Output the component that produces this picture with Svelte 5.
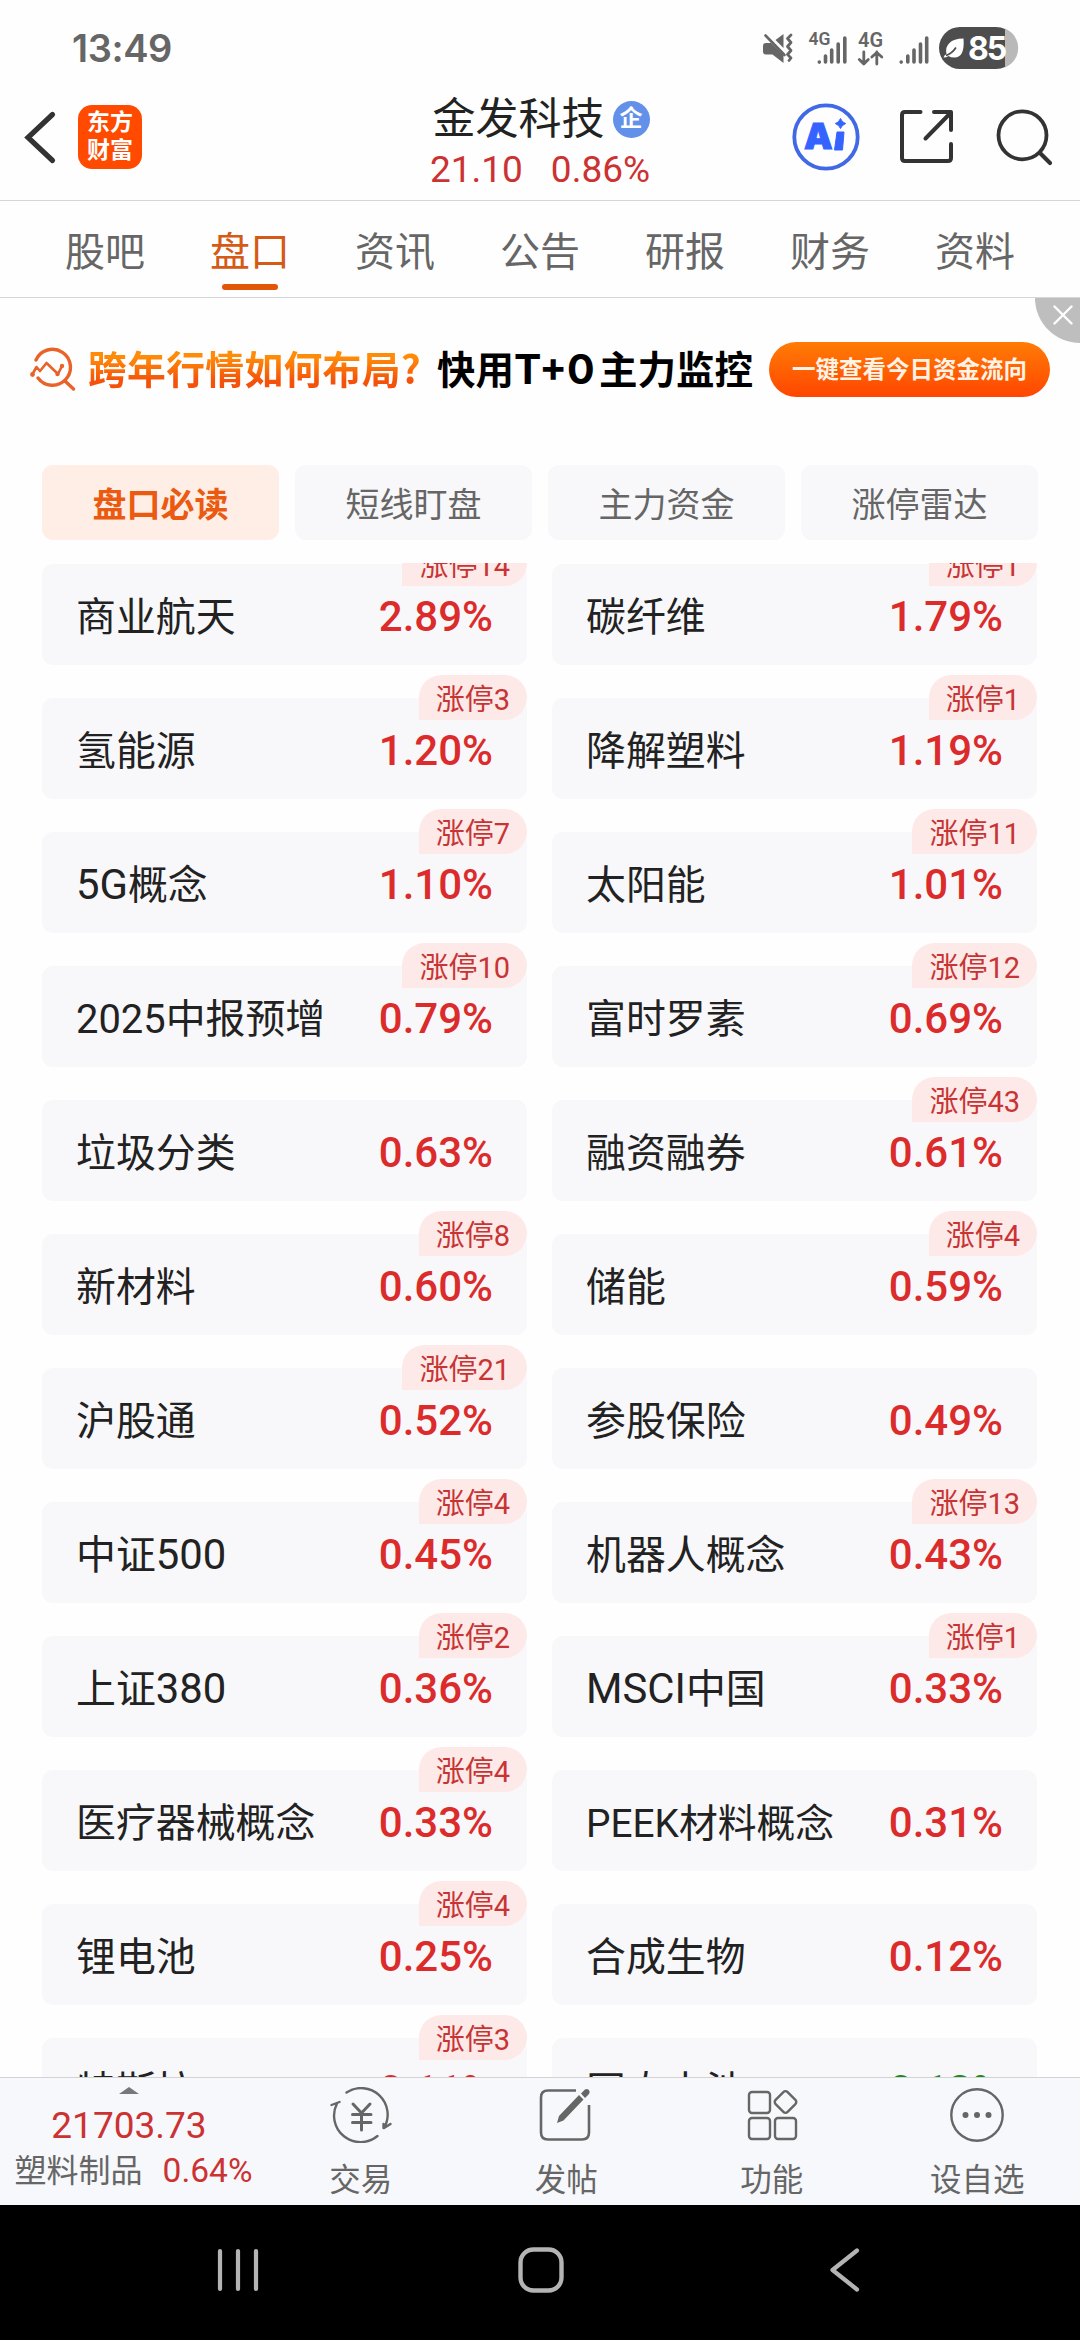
<script>
  const tabs = ['股吧', '盘口', '资讯', '公告', '研报', '财务', '资料'];
  const chips = ['盘口必读', '短线盯盘', '主力资金', '涨停雷达'];
  const sectors = [
    ['商业航天', '2.89%', 14], ['碳纤维', '1.79%', 1],
    ['氢能源', '1.20%', 3], ['降解塑料', '1.19%', 1],
    ['5G概念', '1.10%', 7], ['太阳能', '1.01%', 11],
    ['2025中报预增', '0.79%', 10], ['富时罗素', '0.69%', 12],
    ['垃圾分类', '0.63%', 0], ['融资融券', '0.61%', 43],
    ['新材料', '0.60%', 8], ['储能', '0.59%', 4],
    ['沪股通', '0.52%', 21], ['参股保险', '0.49%', 0],
    ['中证500', '0.45%', 4], ['机器人概念', '0.43%', 13],
    ['上证380', '0.36%', 2], ['MSCI中国', '0.33%', 1],
    ['医疗器械概念', '0.33%', 4], ['PEEK材料概念', '0.31%', 0],
    ['锂电池', '0.25%', 4], ['合成生物', '0.12%', 0],
    ['特斯拉', '0.11%', 3], ['固态电池', '-0.13%', 0]
  ];
  // Latin runs are set slightly larger than the Chinese characters beside them.
  const runs = (name) => name.match(/[A-Z0-9]+|[^A-Z0-9]+/g);
</script>

<div class="screen">
  <div class="status">
    <span class="time">13:49</span>
    <svg class="sysicons" viewBox="760 20 260 56" width="260" height="56">
      <g fill="#666">
        <path d="M766 43h5l12.500 12v8l-11-8.500h-6.500q-3 0-3-3v-5.500q0-3 3-3z" />
        <path d="M775.500 40l8-6v14z" />
      </g>
      <path d="M765.500 35.500l19 19.500" stroke="#666" stroke-width="2.600" stroke-linecap="round" />
      <path d="M791 35l-3.500 3.500 3.500 4-3.500 4 3.500 4-3.500 4 3.500 3.500-2 2.500" fill="none" stroke="#666" stroke-width="2.800" stroke-linecap="round" stroke-linejoin="round" />
      <text class="net" x="808.500" y="44.500" font-size="17.500">4G</text>
      <text class="net" x="858" y="46.500" font-size="20">4G</text>
      <g stroke="#666" stroke-width="3.600" stroke-linecap="round">
        <path d="M819.300 62v.1M825.500 62v-6M831.700 62V50M838.200 62V44M844.800 62V38" />
        <path d="M901.200 62v.1M907.800 62v-6M914 62V50M920.500 62V44M926.700 62V38" />
      </g>
      <path d="M863.800 52v12m-4.500-4.500l4.500 4.500 4.500-4.500M876.800 64V52m-5 5l5-4.500 5 4.500" fill="none" stroke="#666" stroke-width="2.800" stroke-linecap="round" stroke-linejoin="round" />
      <path d="M1005 28.500a21 21 0 0 1 0 39z" fill="#b9b9b9" />
      <path d="M960 27h36q5 0 9 2v38q-4 2-9 2h-36a21 21 0 0 1 0-42z" fill="#4d4d4d" />
      <path d="M963.500 38.500q1.500 19-9 19-4 0-6-1.500-2 1.500-5 1.500 .5-2.500 3-3.500-1.500-7 3-11 4-4.500 14-4.500z" fill="#fff" />
      <path d="M946 55.500q6-2 10-8" fill="none" stroke="#4d4d4d" stroke-width="1.800" />
      <text class="batt" x="968" y="59.500" font-size="32">85</text>
    </svg>
  </div>

  <header>
    <div class="left">
      <svg width="36" height="56" viewBox="22 109 36 56"><path d="M52.500 114.500L28 137.500l24.500 23" fill="none" stroke="#333" stroke-width="5.200" stroke-linecap="round" /></svg>
      <div class="logo"><span>东方</span><span>财富</span></div>
    </div>
    <div class="middle">
      <div class="title"><span>金发科技</span><i class="corp">企</i></div>
      <div class="price"><span>21.10</span><span>0.86%</span></div>
    </div>
    <div class="actions">
      <svg width="68" height="68" viewBox="792 103 68 68">
        <circle cx="826" cy="137" r="31.700" fill="none" stroke="#4169e6" stroke-width="3.800" />
        <text class="ai" x="804" y="149" font-size="36">A</text>
        <path d="M837 132h7l-1.500 18h-8z" fill="#3563ff" stroke="#3563ff" stroke-linejoin="round" />
        <path d="M840.500 118.500q1.500 4 5.200 5-3.700 1.500-5.200 5-1.500-3.500-5.200-5 3.700-1 5.200-5z" fill="#3563ff" stroke="#3563ff" />
      </svg>
      <svg width="58" height="58" viewBox="898 108 58 58"><path d="M920.500 112H905q-3 0-3 3v43q0 3 3 3h43q3 0 3-3v-14M934 112h17v18M925.500 138.500l25-25.500" fill="none" stroke="#333" stroke-width="4" stroke-linecap="round" stroke-linejoin="round" /></svg>
      <svg width="60" height="60" viewBox="994 106 60 60"><circle cx="1022.500" cy="134.300" r="24" fill="none" stroke="#333" stroke-width="3.800" /><path d="M1040 152l10 10" stroke="#333" stroke-width="4.200" stroke-linecap="round" /></svg>
    </div>
  </header>

  <nav class="tabs">
    {#each tabs as t, i}
      <div class="tab" class:on={i === 1}>{t}</div>
    {/each}
  </nav>

  <section class="banner">
    <svg width="46" height="44" viewBox="30 347 46 44">
      <g fill="none" stroke="#e8622a" stroke-width="3.400" stroke-linecap="round" stroke-linejoin="round">
        <path d="M36 360a18 18 0 1 1 2 18M65 381l8.500 8" />
        <path d="M32.500 374l4-7 3.500 4 6.500-8 11.500 11 4-8" stroke-width="2.600" />
      </g>
      <circle cx="32.500" cy="374.500" r="2.400" fill="#e8622a" /><circle cx="57.500" cy="374" r="2.200" fill="#e8622a" /><circle cx="62" cy="366" r="2.200" fill="#e8622a" />
    </svg>
    <span class="ask">跨年行情如何布局?</span>
    <span class="pitch">快用<span class="tplus">T+0</span>主力监控</span>
    <span class="cta">一键查看今日资金流向</span>
    <div class="close"><svg width="20" height="20" viewBox="0 0 20 20"><path d="M1.500 1.500l17 17M18.500 1.500l-17 17" stroke="#fff" stroke-width="2.400" stroke-linecap="round" /></svg></div>
  </section>

  <div class="chips">
    {#each chips as c, i}
      <div class="chip" class:on={i === 0}>{c}</div>
    {/each}
  </div>

  <main>
    {#each sectors as [name, pct, limit]}
      <div class="card">
        <span class="name" class:fit={name.length > 6} class:tight={name.startsWith('PEEK')}>{#each runs(name) as r}<span class:latin={/[A-Z0-9]/.test(r)}>{r}</span>{/each}</span>
        <span class="pct" class:down={pct[0] === '-'}>{pct}</span>
        {#if limit}<span class="limit">涨停{limit}</span>{/if}
      </div>
    {/each}
  </main>

  <footer>
    <div class="index">
      <svg width="20" height="7" viewBox="0 0 20 7"><path d="M0 7L10 0l10 7z" fill="#77787c" /></svg>
      <span class="value">21703.73</span>
      <div class="industry"><span>塑料制品</span><b>0.64%</b></div>
    </div>
    <div class="item">
      <svg viewBox="0 0 64 56" width="64" height="56"><g fill="none" stroke="#666" stroke-width="2.400" stroke-linecap="round" stroke-linejoin="round"><path d="M17.500 5.500A26.500 26.500 0 0 1 55 41M48.500 49A26.500 26.500 0 0 1 8 16.500M2.500 18l8-3M55 41l6.500-4M54.500 41v-4" /><path d="M24 17l8.500 9 8.500-9M32.500 26v17M23.500 27.500h18.500M23.500 35.500h18.500" stroke-width="3" /></g></svg>
      <span>交易</span>
    </div>
    <div class="item">
      <svg viewBox="0 0 64 56" width="64" height="56"><path d="M42 3.500H14q-7 0-7 7v35q0 7 7 7h34q7 0 7-7V18" fill="none" stroke="#666" stroke-width="2.600" /><path d="M23 36l2-7 20-21 4.500 4.500-20 21zM47 6.500l4-4q3-1.500 4.500 1.500.5 2-1 3.500L51 11z" fill="#666" /></svg>
      <span>发帖</span>
    </div>
    <div class="item">
      <svg viewBox="0 0 64 56" width="64" height="56"><g fill="none" stroke="#666" stroke-width="2.400"><rect x="9" y="5" width="21" height="21" rx="3" /><rect x="9" y="31" width="21" height="21" rx="3" /><rect x="35" y="31" width="21" height="21" rx="3" /><rect x="37" y="6.500" width="17" height="17" rx="3" transform="rotate(45 45.500 15)" /></g></svg>
      <span>功能</span>
    </div>
    <div class="item">
      <svg viewBox="0 0 64 56" width="64" height="56"><circle cx="32" cy="28" r="25.700" fill="none" stroke="#666" stroke-width="2.400" /><g fill="#666"><circle cx="20.500" cy="28" r="3" /><circle cx="32" cy="28" r="3" /><circle cx="43.500" cy="28" r="3" /></g></svg>
      <span>设自选</span>
    </div>
  </footer>

  <div class="sysnav">
    <svg width="44" height="48" viewBox="0 0 44 48"><path d="M4 5v38M22 5v38M40 5v38" stroke="#b4b4b4" stroke-width="4.200" stroke-linecap="round" /></svg>
    <svg width="48" height="48" viewBox="0 0 48 48"><rect x="3.500" y="3.500" width="41" height="41" rx="13" fill="none" stroke="#b4b4b4" stroke-width="4.400" /></svg>
    <svg width="44" height="48" viewBox="0 0 44 48"><path d="M35 4.500L10.500 24 35 43.500" fill="none" stroke="#b4b4b4" stroke-width="4.200" stroke-linecap="round" stroke-linejoin="round" /></svg>
  </div>
</div>

<style>
  :global(body) { background: #fff; }
  .screen, .screen * { box-sizing: border-box; }
  .screen {
    width: 1080px; height: 2340px; overflow: hidden; background: #fefefe;
    display: flex; flex-direction: column; white-space: nowrap;
    font-family: Roboto, "Noto Sans CJK SC", sans-serif; color: #222;
  }
  svg { display: block; flex: none; }
  .status { height: 96px; display: flex; justify-content: space-between; padding: 0 60px 0 72px; align-items: center; flex: none; }
  .time { font: 600 38px Inter, sans-serif; color: #666; letter-spacing: -.4px; }
  .net { font-family: Roboto, sans-serif; font-weight: 600; fill: #666; }
  .batt { font-family: Inter, sans-serif; font-weight: 700; fill: #fff; letter-spacing: -2px; }
  .ai { font-family: Inter, sans-serif; font-weight: 900; fill: #3563ff; stroke: #3563ff; stroke-width: 1px; }

  header { height: 105px; border-bottom: 1px solid #d6d6d8; display: grid; grid-template: 104px / 300px 1fr 300px; align-items: center; padding: 0 26px 0 22px; flex: none; }
  .left { display: flex; align-items: center; gap: 20px; padding-bottom: 22px; }
  .logo { width: 64px; height: 64px; border-radius: 14px; background: #ff4a00; color: #fff; display: flex; flex-direction: column; align-items: center; justify-content: center; font-weight: 700; font-size: 23px; line-height: 28px; }
  .middle { align-self: start; margin-top: -4px; display: flex; flex-direction: column; align-items: center; padding-left: 4px; }
  .title { display: flex; align-items: center; gap: 8px; padding-left: 2px; font-size: 43px; line-height: 54px; }
  .corp { width: 37px; height: 37px; border-radius: 50%; background: #6390e8; color: #fff; font-style: normal; font-size: 23px; font-weight: 700; line-height: 36px; text-align: center; }
  .price { display: flex; gap: 28px; color: #cc3232; font-size: 37px; line-height: 47px; }
  .actions { display: flex; justify-content: flex-end; align-items: center; gap: 38px; padding-bottom: 22px; }

  .tabs { height: 97px; border-bottom: 1px solid #d6d6d8; display: flex; padding: 0 32.500px; flex: none; }
  .tab { flex: 1; display: flex; align-items: center; justify-content: center; font-size: 40px; line-height: 60px; padding-top: 7px; color: #666; position: relative; }
  .tab.on { color: #d45a16; }
  .tab.on::after { content: ""; position: absolute; left: 50%; margin-left: -28px; bottom: 7px; width: 56px; height: 6px; border-radius: 3px; background: #e2560a; }

  .banner { height: 142px; position: relative; display: flex; align-items: center; padding-left: 30px; font-family: "Noto Sans CJK SC", sans-serif; font-weight: 700; flex: none; }
  .ask { margin-left: 12px; width: 349px; padding-bottom: 4px; font-size: 38.800px; letter-spacing: .3px; background: linear-gradient(#ff8c08 30%, #f4520a 70%); -webkit-background-clip: text; background-clip: text; color: transparent; }
  .pitch { width: 332px; padding-bottom: 4px; font-size: 38.500px; color: #000; }
  .tplus { display: inline-block; width: 85px; font-family: Inter, sans-serif; font-size: 41px; line-height: 40px; }
  .cta { width: 281px; height: 55px; border-radius: 28px; background: linear-gradient(#ff7c06, #ff4600); color: #fff3e6; font-size: 23.500px; line-height: 52px; text-align: center; }
  .close { position: absolute; right: 0; top: 0; width: 45px; height: 45px; border-bottom-left-radius: 45px; background: #bebebe; padding: 7px 0 0 18px; }

  .chips { height: 123px; padding: 25px 42px 0; display: grid; grid-template-columns: repeat(4, 1fr); gap: 16px; flex: none; }
  .chip { height: 75px; border-radius: 11px; background: #f8f8fa; color: #666; font-size: 34px; line-height: 81px; text-align: center; }
  .chip.on { background: #ffeee5; color: #ea5a10; font-weight: 700; }

  main { height: 1514px; overflow: hidden; padding: 1px 43px 0 42px; display: grid; grid-template-columns: 1fr 1fr; column-gap: 25px; row-gap: 33px; grid-auto-rows: 101px; flex: none; }
  .card { position: relative; background: #f8f8fb; border-radius: 11px; padding: 6px 34px 0 34px; display: flex; justify-content: space-between; align-items: center; font-size: 39.900px; line-height: 60px; }
  .latin { font-size: 41.800px; }
  .fit .latin { font-size: inherit; }
  .name.tight { font-size: 38.800px; }
  .pct { color: #dc2b2b; font-weight: 500; font-size: 42px; padding-bottom: 2px; }
  .pct.down { color: #1c8a22; }
  .limit { position: absolute; right: 0; top: -23px; height: 45px; padding: 0 17px; border-radius: 23px 23px 23px 0; background: #fde9e8; color: #c83434; font-size: 29px; line-height: 51px; }

  footer { height: 128px; background: #f7f8fb; border-top: 1px solid #d3d3d6; display: flex; color: #666; flex: none; }
  .index { width: 258px; display: flex; flex-direction: column; align-items: center; padding-top: 9px; }
  .value { color: #cc3232; font-size: 37px; line-height: 50px; margin-top: 7px; }
  .industry { display: flex; align-items: center; gap: 20px; padding-left: 9px; font-size: 32px; line-height: 40px; }
  .industry b { font-weight: 400; font-size: 33.500px; color: #cc3232; }
  .item { flex: 1; display: flex; flex-direction: column; align-items: center; padding-top: 9px; font-size: 31.500px; line-height: 44px; gap: 16px; }

  .sysnav { flex: 1; background: #000; display: flex; align-items: center; justify-content: space-between; padding: 0 214px 5px 216px; }
</style>
